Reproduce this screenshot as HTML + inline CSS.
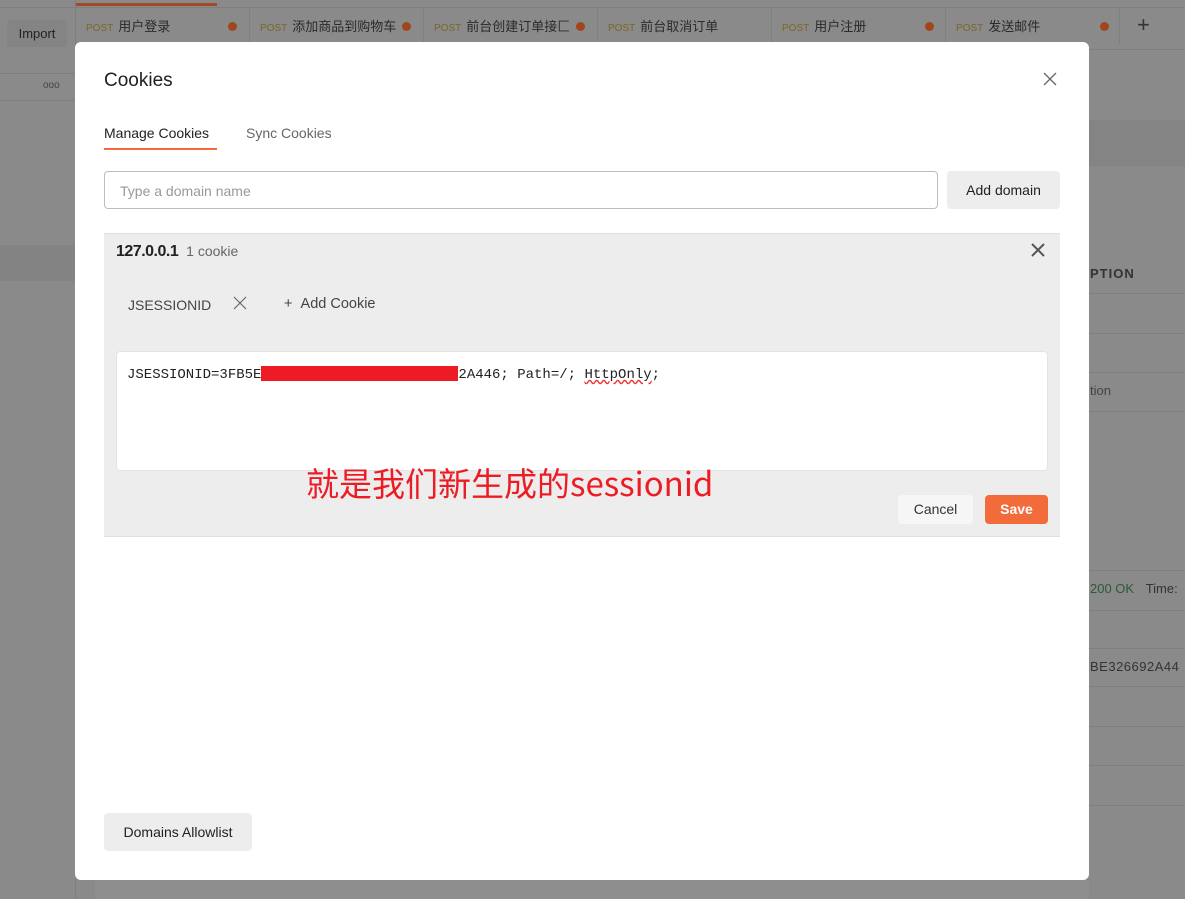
<!DOCTYPE html>
<html><head><meta charset="utf-8"><style>
*{box-sizing:border-box;margin:0;padding:0}
body{width:1185px;height:899px;overflow:hidden;background:#8a8a8a;font-family:"Liberation Sans","Noto Sans CJK SC",sans-serif;position:relative;color:#212121}
.abs{position:absolute}
.tab{position:absolute;top:8px;height:37px;font-size:13px;color:#2a2a2a;line-height:37px;padding-left:10px;border-right:1px solid #7f7f7f}
.tab b{font-weight:normal;color:#7d6428;font-size:10px;margin-right:5px}
.dot{position:absolute;top:14px;width:9px;height:9px;border-radius:50%;background:#a0461f}
.line{position:absolute;left:1089px;right:0;height:1px;background:#7e7e7e}
.bgtxt{position:absolute;left:1090px;font-size:13px;color:#333}
</style></head><body>
<div class="abs" style="left:0;top:0;width:1185px;height:8px;background:#8a8a8a;border-bottom:1px solid #7e7e7e"></div>
<div class="abs" style="left:75px;top:0;width:1px;height:899px;background:#7e7e7e"></div>
<div class="abs" style="left:7px;top:20px;width:60px;height:27px;background:#848484;border-radius:3px;font-size:13px;line-height:27px;text-align:center;color:#222">Import</div>
<div class="abs" style="left:0;top:73px;width:75px;height:1px;background:#7e7e7e"></div>
<div class="abs" style="left:0;top:100px;width:75px;height:1px;background:#7e7e7e"></div>
<div class="abs" style="left:43px;top:80px;font-size:10px;color:#444">ooo</div>
<div class="abs" style="left:0;top:245px;width:75px;height:36px;background:#838383"></div>
<div class="abs" style="left:76px;top:3px;width:141px;height:3px;background:#a04a28"></div>
<div class="tab" style="left:76px;width:174px"><b>POST</b>用户登录</div><div class="dot" style="left:228px;top:22px"></div>
<div class="tab" style="left:250px;width:174px"><b>POST</b>添加商品到购物车</div><div class="dot" style="left:402px;top:22px"></div>
<div class="tab" style="left:424px;width:174px"><b>POST</b>前台创建订单接匚</div><div class="dot" style="left:576px;top:22px"></div>
<div class="tab" style="left:598px;width:174px"><b>POST</b>前台取消订单</div>
<div class="tab" style="left:772px;width:174px"><b>POST</b>用户注册</div><div class="dot" style="left:925px;top:22px"></div>
<div class="tab" style="left:946px;width:174px"><b>POST</b>发送邮件</div><div class="dot" style="left:1100px;top:22px"></div>
<div class="abs" style="left:1137px;top:12px;font-size:22px;color:#333">+</div>
<div class="abs" style="left:1076px;top:49px;width:109px;height:1px;background:#7e7e7e"></div>
<div class="abs" style="left:1089px;top:120px;right:0;height:46px;background:#848484"></div>
<div class="line" style="top:293px"></div><div class="line" style="top:333px"></div><div class="line" style="top:372px"></div><div class="line" style="top:411px"></div>
<div class="line" style="top:570px"></div><div class="line" style="top:610px"></div><div class="line" style="top:648px"></div><div class="line" style="top:686px"></div><div class="line" style="top:726px"></div><div class="line" style="top:765px"></div><div class="line" style="top:805px"></div>
<div class="bgtxt" style="top:266px;font-weight:bold;letter-spacing:1px">PTION</div>
<div class="bgtxt" style="top:383px;color:#444">tion</div>
<div class="bgtxt" style="top:581px;color:#2e5a3a">200 OK <span style="color:#333;margin-left:8px">Time:</span></div>
<div class="bgtxt" style="top:659px;letter-spacing:.5px">BE326692A44</div>
<div class="abs" style="left:95px;top:880px;width:994px;height:19px;background:#8e8e8e"></div>

<div class="abs" style="left:75px;top:42px;width:1014px;height:838px;background:#fff;border-radius:6px">
 <div class="abs" style="left:29px;top:28px;font-size:19px;color:#212121">Cookies</div>
 <svg class="abs" style="left:968px;top:30px" width="14" height="14"><path d="M1 1L13 13M13 1L1 13" stroke="#666" stroke-width="1.3"/></svg>
 <div class="abs" style="left:29px;top:83px;font-size:14px;line-height:16px;color:#212121">Manage Cookies</div>
 <div class="abs" style="left:29px;top:106px;width:113px;height:2px;background:#f26b3a"></div>
 <div class="abs" style="left:171px;top:83px;font-size:14px;line-height:16px;color:#666">Sync Cookies</div>
 <div class="abs" style="left:29px;top:129px;width:834px;height:38px;border:1px solid #bdbdbd;border-radius:4px;font-size:14px;color:#999;padding:11px 15px">Type a domain name</div>
 <div class="abs" style="left:872px;top:129px;width:113px;height:38px;background:#ededed;border-radius:4px;font-size:14px;line-height:38px;text-align:center;color:#212121">Add domain</div>
 <div class="abs" style="left:29px;top:191px;width:956px;height:304px;background:#ededed;border-top:1px solid #e0e0e0;border-bottom:1px solid #e0e0e0">
  <div class="abs" style="left:12px;top:9px;font-size:16px;font-weight:bold;color:#212121;letter-spacing:-.5px">127.0.0.1 <span style="font-weight:normal;font-size:14px;color:#666;margin-left:4px;letter-spacing:0">1 cookie</span></div>
  <svg class="abs" style="left:927px;top:9px" width="14" height="14"><path d="M1 1L13 13M13 1L1 13" stroke="#555" stroke-width="2"/></svg>
  <div class="abs" style="left:24px;top:63px;font-size:14px;color:#444">JSESSIONID</div>
  <svg class="abs" style="left:129px;top:62px" width="14" height="14"><path d="M1 1L13 13M13 1L1 13" stroke="#666" stroke-width="1.2"/></svg>
  <div class="abs" style="left:180px;top:62px;font-size:14.5px;line-height:16px;color:#444">+ &nbsp;Add Cookie</div>
  <div class="abs" style="left:12px;top:117px;width:932px;height:120px;background:#fff;border:1px solid #e3e3e3;border-radius:4px;font-family:'Liberation Mono',monospace;font-size:14px;color:#222;padding:14px 10px">JSESSIONID=3FB5E<span style="display:inline-block;width:197px;height:15px;background:#ed1c24;vertical-align:-3px"></span>2A446; Path=/; <span style="text-decoration:underline wavy #e33">HttpOnly</span>;</div>
  <div class="abs" style="left:202px;top:224px;font-size:33px;color:#ed1c24;font-family:'Noto Sans CJK SC','Liberation Sans',sans-serif">就是我们新生成的sessionid</div>
  <div class="abs" style="left:794px;top:261px;width:75px;height:29px;background:#f6f6f6;border-radius:4px;font-size:14px;line-height:29px;text-align:center;color:#333">Cancel</div>
  <div class="abs" style="left:881px;top:261px;width:63px;height:29px;background:#f26b3a;border-radius:4px;font-size:14px;font-weight:bold;line-height:29px;text-align:center;color:#fff">Save</div>
 </div>
 <div class="abs" style="left:29px;top:771px;width:148px;height:38px;background:#ededed;border-radius:4px;font-size:14px;line-height:38px;text-align:center;color:#212121">Domains Allowlist</div>
</div>
</body></html>
